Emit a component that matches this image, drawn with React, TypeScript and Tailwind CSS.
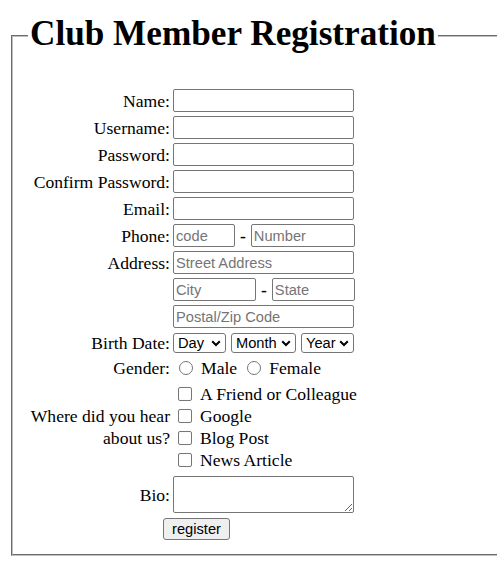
import type { ReactNode } from 'react';

const field =
  "h-[23px] border border-[#767676] rounded-[2px] bg-white px-[2px] text-[14.667px] text-black font-['Liberation_Sans',Arial,sans-serif] placeholder:text-[#757575] outline-none";

const Row = ({ label, children, className = '' }: { label?: ReactNode; children: ReactNode; className?: string }) => (
  <div className={`flex items-center ${className}`}>
    <div className="w-[142px] shrink-0 text-right">{label}</div>
    <div className="ml-[3px] flex items-center">{children}</div>
  </div>
);

const Dropdown = ({ label, width }: { label: string; width: string }) => (
  <div className={`relative flex h-[20px] ${width}`}>
    <select className="h-[20px] w-full appearance-none rounded-[3px] border border-[#767676] bg-white py-0 pl-[4px] text-[14.667px] leading-[18px] text-black font-['Liberation_Sans',Arial,sans-serif] outline-none">
      <option>{label}</option>
    </select>
    {/* native-looking chevron */}
    <svg className="pointer-events-none absolute right-[5px] top-[7px]" width="10" height="7" viewBox="0 0 10 7">
      <path d="M1.2 1.2 L5 5 L8.8 1.2" fill="none" stroke="#000" strokeWidth="2" />
    </svg>
  </div>
);

const Check = ({ text }: { text: string }) => (
  <label className="flex h-[22px] items-center">
    <input type="checkbox" className="ml-[5px] h-[14px] w-[14px] appearance-none rounded-[2px] border border-[#767676] bg-white" />
    <span className="ml-[8px]">{text}</span>
  </label>
);

export default function App() {
  return (
    <div className="min-h-[575px] w-[497px] overflow-hidden bg-white pl-[11px] pt-[14px] text-[17.6px] leading-[20px] text-black font-['Liberation_Serif','Times_New_Roman',serif]">
      <fieldset className="w-[600px] border-2 border-[#c0c0c0] [border-style:groove] pb-[14px] pl-[15px]">
        <legend className="px-[2px] pb-[3px]">
          <h1 className="text-[35.2px] font-bold leading-[40px]">Club Member Registration</h1>
        </legend>

        <form className="pt-[32px]">
          <Row label="Name:" className="h-[23px]">
            <input className={`${field} w-[181px]`} />
          </Row>
          <Row label="Username:" className="mt-[4px] h-[23px]">
            <input className={`${field} w-[181px]`} />
          </Row>
          <Row label="Password:" className="mt-[4px] h-[23px]">
            <input type="password" className={`${field} w-[181px]`} />
          </Row>
          <Row label="Confirm Password:" className="mt-[4px] h-[23px]">
            <input type="password" className={`${field} w-[181px]`} />
          </Row>
          <Row label="Email:" className="mt-[4px] h-[23px]">
            <input className={`${field} w-[181px]`} />
          </Row>
          <Row label="Phone:" className="mt-[4px] h-[23px]">
            <input className={`${field} w-[62px]`} placeholder="code" />
            <b className="mx-[5px]">-</b>
            <input className={`${field} w-[104px]`} placeholder="Number" />
          </Row>
          <Row label="Address:" className="mt-[4px] h-[23px]">
            <input className={`${field} w-[181px]`} placeholder="Street Address" />
          </Row>
          <Row className="mt-[4px] h-[23px]">
            <input className={`${field} w-[83px]`} placeholder="City" />
            <b className="mx-[5px]">-</b>
            <input className={`${field} w-[83px]`} placeholder="State" />
          </Row>
          <Row className="mt-[4px] h-[23px]">
            <input className={`${field} w-[181px]`} placeholder="Postal/Zip Code" />
          </Row>
          <Row label="Birth Date:" className="mt-[4px] h-[22px]">
            <div className="flex gap-[5px]">
              <Dropdown label="Day" width="w-[53px]" />
              <Dropdown label="Month" width="w-[65px]" />
              <Dropdown label="Year" width="w-[53px]" />
            </div>
          </Row>
          <Row label="Gender:" className="mt-[3px] h-[22px]">
            <input type="radio" name="g" className="ml-[6px] h-[14px] w-[14px] appearance-none rounded-full border border-[#767676] bg-white" />
            <span className="ml-[8px]">Male</span>
            <input type="radio" name="g" className="ml-[10px] h-[14px] w-[14px] appearance-none rounded-full border border-[#767676] bg-white" />
            <span className="ml-[8px]">Female</span>
          </Row>
          <Row
            label={
              <span className="block leading-[22px]">
                Where did you hear
                <br />
                about us?
              </span>
            }
            className="mt-[4px] h-[88px]"
          >
            <div className="flex flex-col">
              <Check text="A Friend or Colleague" />
              <Check text="Google" />
              <Check text="Blog Post" />
              <Check text="News Article" />
            </div>
          </Row>
          <Row label="Bio:" className="mt-[5px] h-[37px]">
            <textarea className="block h-[37px] w-[181px] rounded-[2px] border border-[#767676] bg-white px-[2px] text-[14.667px] outline-none" />
          </Row>
          <div className="mt-[5px] flex pl-[135px]">
            <button type="button" className="h-[22px] w-[67px] rounded-[3px] border border-[#767676] bg-[#efefef] text-[14.667px] leading-[18px] text-black font-['Liberation_Sans',Arial,sans-serif]">
              register
            </button>
          </div>
        </form>
      </fieldset>
    </div>
  );
}
